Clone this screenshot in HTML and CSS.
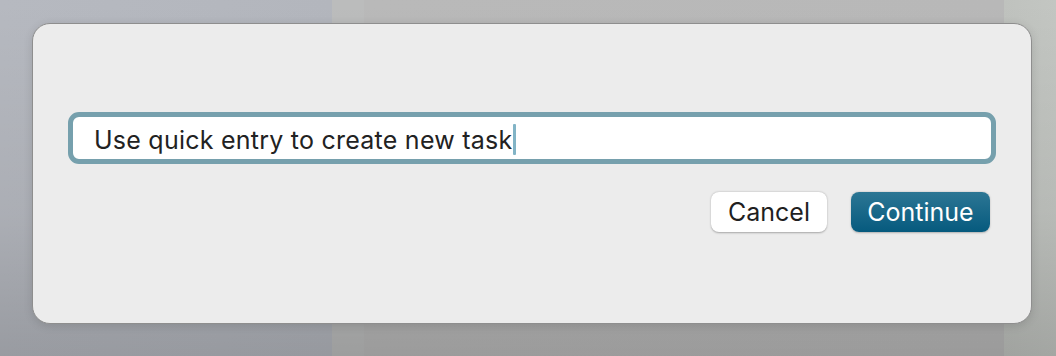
FILE: index.html
```html
<!DOCTYPE html>
<html>
<head>
<meta charset="utf-8">
<link rel="stylesheet" href="styles.css">
</head>
<body>
<div class="desktop">
  <div class="dialog">
    <div class="field">
      <span class="value">Use quick entry to create new task</span><span class="caret"></span>
    </div>
    <div class="actions">
      <button class="btn btn-cancel">Cancel</button>
      <button class="btn btn-continue">Continue</button>
    </div>
  </div>
</div>
</body>
</html>
```
FILE: styles.css
```css
html, body {
  margin: 0;
  padding: 0;
  width: 1056px;
  height: 356px;
  overflow: hidden;
}
.desktop {
  box-sizing: border-box;
  width: 1056px;
  height: 356px;
  padding: 23px 24px 32px 32px;
  background:
    linear-gradient(180deg, rgba(0,0,0,0) 0%, rgba(0,0,0,0.06) 60%, rgba(0,0,0,0.16) 100%),
    linear-gradient(90deg, #b6b9c0 0px, #b3b6bd 332px, #bbbcbc 332px, #bbbcbc 364px, #b9b9b9 364px, #b8b8b8 1004px, #bfc2be 1004px, #c3c6c2 1056px);
  font-family: Inter, "Liberation Sans", sans-serif;
}
.dialog {
  box-sizing: border-box;
  height: 301px;
  background: #ececec;
  border: 1px solid #8e8e8e;
  border-radius: 18px;
  padding: 88px 35px 0 35px;
  box-shadow: 0 2px 10px rgba(0,0,0,0.12);
}
.field {
  box-sizing: border-box;
  height: 52px;
  border: 5px solid #76a0ad;
  border-radius: 11px;
  background: #fff;
  display: flex;
  align-items: center;
  padding-left: 21px;
}
.value {
  font-size: 25px;
  line-height: 30px;
  color: #222222;
  letter-spacing: 0.24px;
  white-space: nowrap;
  position: relative;
  top: 2px;
}
.caret {
  display: inline-block;
  width: 3px;
  height: 31px;
  background: #82b4c6;
  border-radius: 1px;
  margin-left: 1px;
  position: relative;
  top: 1px;
}
.actions {
  display: flex;
  justify-content: flex-end;
  gap: 24px;
  margin-top: 28px;
  padding-right: 6px;
}
.btn {
  font-family: Inter, "Liberation Sans", sans-serif;
  font-size: 25px;
  height: 40px;
  border-radius: 8px;
  border: none;
  padding: 0;
  cursor: default;
}
.btn-cancel {
  width: 116px;
  background: #ffffff;
  color: #1f1f1f;
  box-shadow: 0 0.5px 2px rgba(0,0,0,0.3);
}
.btn-continue {
  width: 139px;
  background: linear-gradient(180deg, #2c7694 0%, #065a7e 100%);
  color: #ffffff;
  box-shadow: 0 0.5px 2px rgba(0,0,0,0.25);
}
```
